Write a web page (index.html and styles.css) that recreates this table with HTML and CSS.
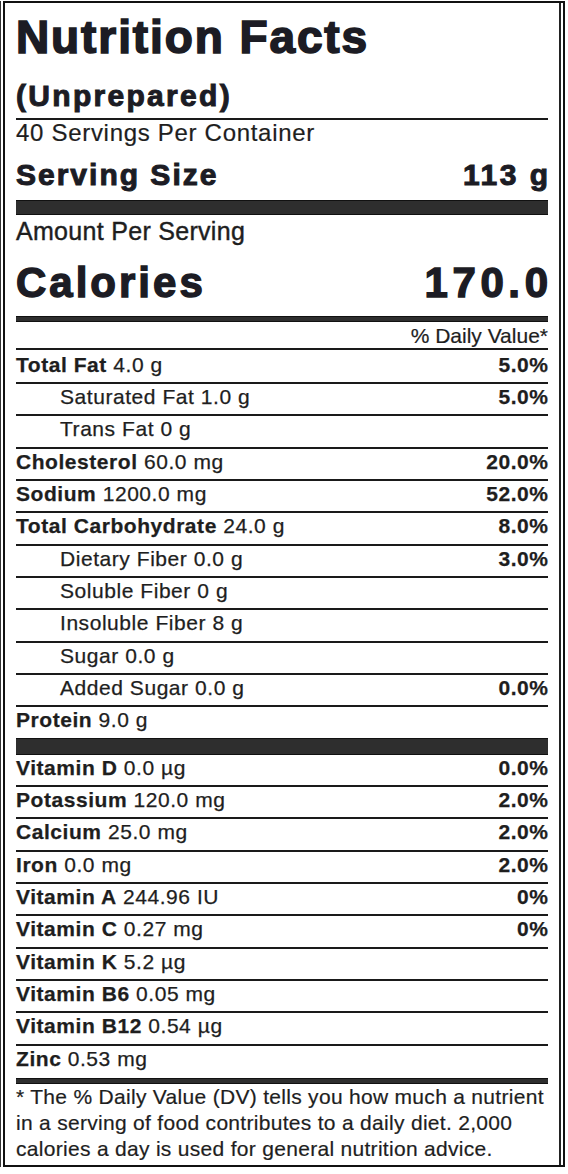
FILE: index.html
```html
<!doctype html>
<html lang="en">
<head>
    <meta charset="UTF-8">
    <meta name="viewport" content="width=device-width, initial-scale=1.0">
    <title>Nutrition Facts</title>
    <link rel="stylesheet" href="styles.css">
</head>
<body>
    <div class="frame">
        <div class="label">
            <header class="head">
                <h1 class="title">Nutrition Facts</h1>
                <p class="subtitle">(Unprepared)</p>
            </header>
            <p class="servings">40 Servings Per Container</p>
            <div class="size">
                <span>Serving Size</span>
                <span class="size-val">113 g</span>
            </div>
            <div class="bar bar-lg"></div>
            <p class="amount">Amount Per Serving</p>
            <div class="calories">
                <span>Calories</span>
                <span class="cal-val">170.0</span>
            </div>
            <div class="bar bar-md"></div>
            <div class="dv-head">% Daily Value*</div>

            <ul class="rows">
                <li class="row first"><span><b>Total Fat</b> 4.0 g</span><b class="pct">5.0%</b></li>
                <li class="row sub"><span>Saturated Fat 1.0 g</span><b class="pct">5.0%</b></li>
                <li class="row sub"><span>Trans Fat 0 g</span></li>
                <li class="row"><span><b>Cholesterol</b> 60.0 mg</span><b class="pct">20.0%</b></li>
                <li class="row"><span><b>Sodium</b> 1200.0 mg</span><b class="pct">52.0%</b></li>
                <li class="row"><span><b>Total Carbohydrate</b> 24.0 g</span><b class="pct">8.0%</b></li>
                <li class="row sub"><span>Dietary Fiber 0.0 g</span><b class="pct">3.0%</b></li>
                <li class="row sub"><span>Soluble Fiber 0 g</span></li>
                <li class="row sub"><span>Insoluble Fiber 8 g</span></li>
                <li class="row sub"><span>Sugar 0.0 g</span></li>
                <li class="row sub"><span>Added Sugar 0.0 g</span><b class="pct">0.0%</b></li>
                <li class="row last"><span><b>Protein</b> 9.0 g</span></li>
            </ul>

            <div class="bar bar-vit"></div>

            <ul class="rows">
                <li class="row"><span><b>Vitamin D</b> 0.0 µg</span><b class="pct">0.0%</b></li>
                <li class="row"><span><b>Potassium</b> 120.0 mg</span><b class="pct">2.0%</b></li>
                <li class="row"><span><b>Calcium</b> 25.0 mg</span><b class="pct">2.0%</b></li>
                <li class="row"><span><b>Iron</b> 0.0 mg</span><b class="pct">2.0%</b></li>
                <li class="row"><span><b>Vitamin A</b> 244.96 IU</span><b class="pct">0%</b></li>
                <li class="row"><span><b>Vitamin C</b> 0.27 mg</span><b class="pct">0%</b></li>
                <li class="row"><span><b>Vitamin K</b> 5.2 µg</span></li>
                <li class="row"><span><b>Vitamin B6</b> 0.05 mg</span></li>
                <li class="row"><span><b>Vitamin B12</b> 0.54 µg</span></li>
                <li class="row last"><span><b>Zinc</b> 0.53 mg</span></li>
            </ul>

            <div class="bar bar-sm"></div>

            <p class="note">* The % Daily Value (DV) tells you how much a nutrient<br>in a serving of food contributes to a daily diet. 2,000<br>calories a day is used for general nutrition advice.</p>
        </div>
    </div>
</body>
</html>
```

FILE: styles.css
```css
body {
    margin: 0;
    background: #fff;
    color: #1e1e1e;
    font-family: "Liberation Sans", Arial, sans-serif;
}
.frame {
    width: 567px;
    border-left: 1px solid #333;
}
.label {
    width: 532px;
    margin: 1px 0 0 2px;
    padding: 9px 15px 3px 11px;
    border: 2px solid #111;
    box-shadow: inset -2px 0 0 #fff, inset -4px 0 0 #222;
}
p {
    margin: 0;
}

/* heavy headings (Arial Black look) */
.title,
.subtitle,
.size,
.calories {
    font-weight: 700;
    color: #1c1c24;
}
.title {
    margin: 0;
    font-size: 46px;
    line-height: 50px;
    letter-spacing: 1.9px;
    -webkit-text-stroke: 1.6px #1c1c24;
}
.subtitle {
    margin-top: 17px;
    font-size: 30px;
    line-height: 34px;
    letter-spacing: 2.3px;
    -webkit-text-stroke: 1px #1c1c24;
}
.head {
    padding-bottom: 5px;
    border-bottom: 2px solid #1a1a1a;
}
.servings {
    font-size: 24px;
    line-height: 26px;
    letter-spacing: 0.7px;
    -webkit-text-stroke: 0.2px #1e1e1e;
}
.size {
    display: flex;
    justify-content: space-between;
    margin-top: 12px;
    font-size: 30px;
    line-height: 34px;
    letter-spacing: 2px;
    -webkit-text-stroke: 1px #1c1c24;
}
.size-val {
    letter-spacing: 2.5px;
    margin-right: -2.5px;
}
.bar {
    background: #2e2e2e;
    border-top: 1px solid #111;
    border-bottom: 1px solid #111;
    box-sizing: border-box;
}
.bar-lg {
    margin-top: 8px;
    height: 15px;
}
.bar-md {
    margin-top: 10px;
    height: 6px;
}
.bar-vit {
    height: 17px;
}
.bar-sm {
    margin-top: 2px;
    height: 6px;
}
.amount {
    margin-top: 2px;
    font-size: 25px;
    line-height: 28px;
    letter-spacing: 0.3px;
    -webkit-text-stroke: 0.4px #1e1e1e;
}
.calories {
    display: flex;
    justify-content: space-between;
    margin-top: 15px;
    font-size: 42px;
    line-height: 46px;
    letter-spacing: 3px;
    -webkit-text-stroke: 1.4px #1c1c24;
}
.cal-val {
    letter-spacing: 4.6px;
    margin-right: -4.6px;
}
.dv-head {
    padding-top: 2px;
    font-size: 21px;
    line-height: 24px;
    text-align: right;
    border-bottom: 2px solid #1a1a1a;
    -webkit-text-stroke: 0.2px #1e1e1e;
}

/* nutrient rows */
.rows {
    list-style: none;
    margin: 0;
    padding: 0;
}
.row {
    display: flex;
    justify-content: space-between;
    height: 30.33px;
    font-size: 21px;
    line-height: 26px;
    letter-spacing: 0.55px;
    border-bottom: 2px solid #1a1a1a;
    -webkit-text-stroke: 0.25px #1e1e1e;
}
.row.first {
    padding-top: 1.67px;
}
.row.sub {
    padding-left: 44px;
}
.row.last {
    border-bottom: none;
}
.pct {
    margin-right: -0.55px;
}
.note {
    font-size: 21px;
    line-height: 26px;
    letter-spacing: 0.3px;
    -webkit-text-stroke: 0.2px #1e1e1e;
}
```
